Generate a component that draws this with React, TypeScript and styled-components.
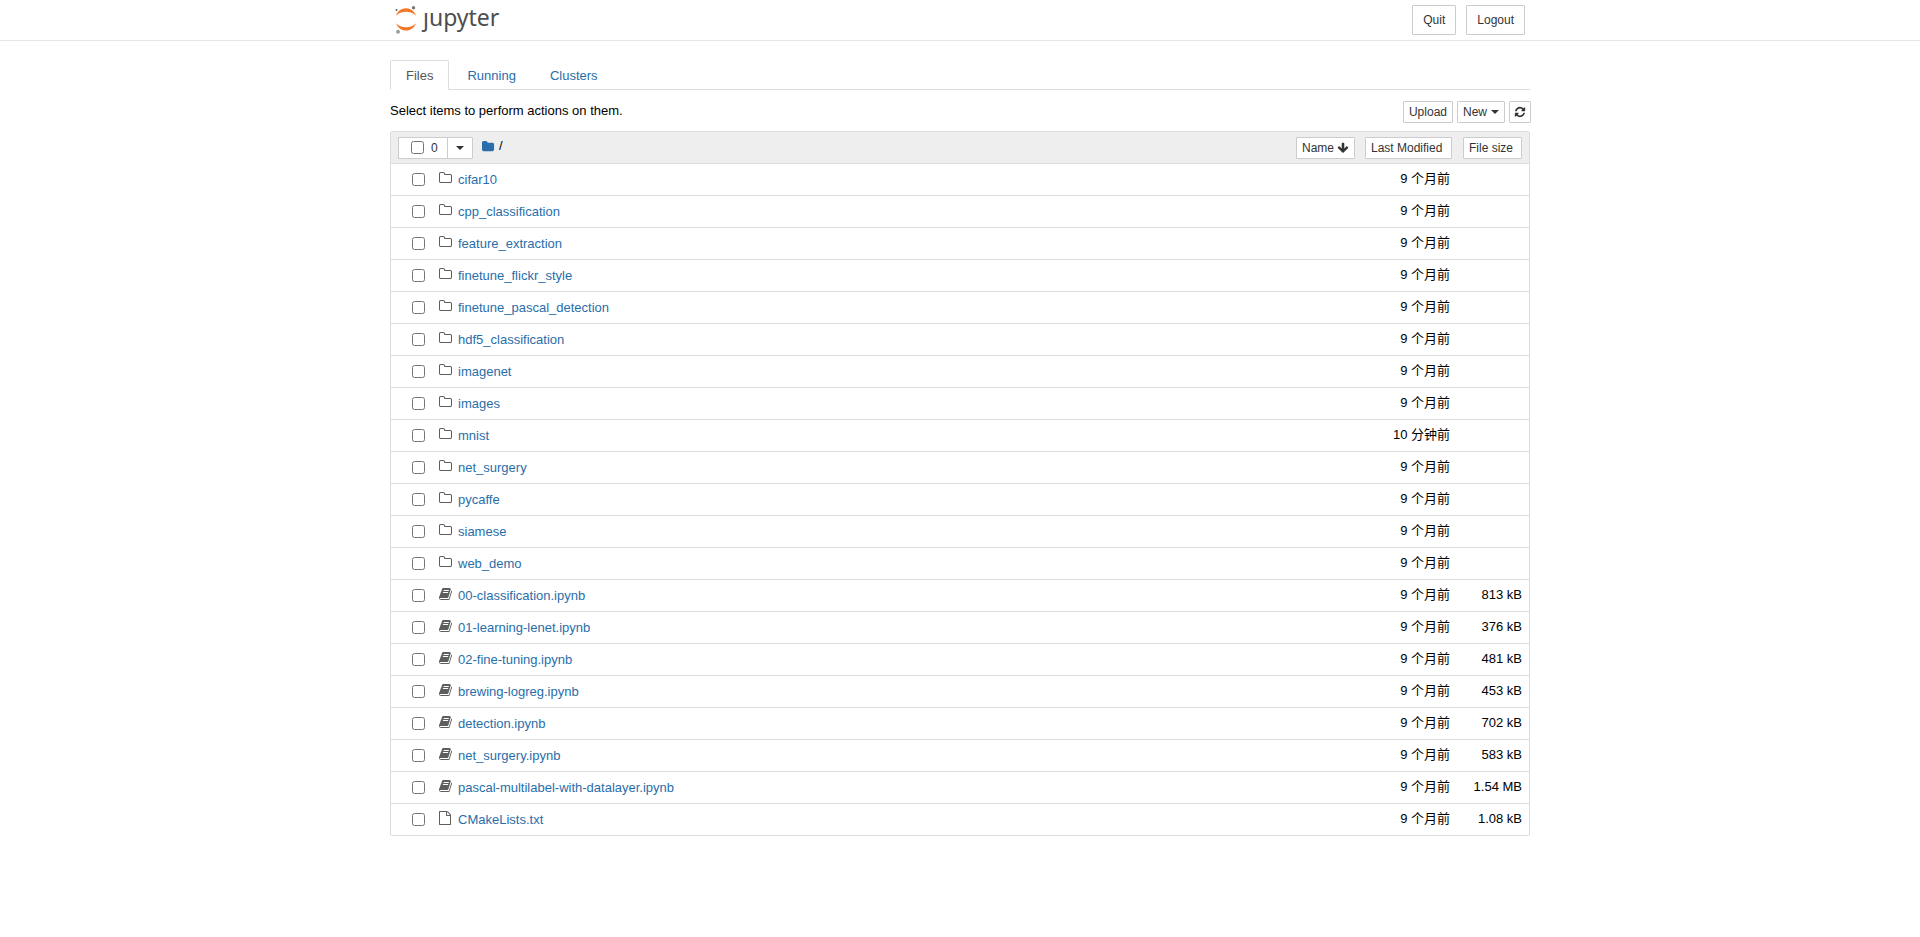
import React from "react";
import styled, { createGlobalStyle } from "styled-components";

const GlobalStyle = createGlobalStyle`
  *, *::before, *::after { box-sizing: border-box; }
  body {
    margin: 0;
    background: #fff;
    color: #000;
    font-family: "Liberation Sans", Arial, "Noto Sans CJK SC", sans-serif;
    font-size: 13px;
    line-height: 20px;
  }
`;

const Container = styled.div`
  max-width: 1140px;
  margin: 0 auto;
`;

const Header = styled.header`
  border-bottom: 1px solid #e7e7e7;
`;

const HeaderInner = styled(Container)`
  display: flex;
  justify-content: space-between;
  align-items: flex-start;
  height: 40px;
  padding: 5px 5px 0;
`;

const Brand = styled.a`
  display: flex;
  gap: 6px;
  color: #4e4e4e;
  text-decoration: none;
`;

const BrandName = styled.span`
  font-family: "Noto Sans", "Open Sans", sans-serif;
  font-size: 23px;
  line-height: 24px;
`;

const HeaderActions = styled.div`
  display: flex;
  gap: 10px;
`;

const Button = styled.button<{ $large?: boolean }>`
  display: inline-flex;
  align-items: center;
  gap: 4px;
  height: ${(p) => (p.$large ? 30 : 22)}px;
  padding: ${(p) => (p.$large ? "0 10px" : "0 5px")};
  border: 1px solid #ccc;
  border-radius: 1px;
  background: #fff;
  color: #333;
  font: 12px/18px "Liberation Sans", Arial, sans-serif;
  cursor: pointer;
`;

const IconButton = styled(Button)`
  padding: 0 4px;
`;

const SortButton = styled(Button)<{ $width: number }>`
  gap: 3px;
  width: ${(p) => p.$width}px;
`;

const Tabs = styled.nav`
  display: flex;
  gap: 2px;
  margin-top: 19px;
  border-bottom: 1px solid #ddd;
`;

const Tab = styled.a<{ $active?: boolean }>`
  margin-bottom: -1px;
  padding: 5px 15px 3px;
  border: 1px solid ${(p) => (p.$active ? "#ddd" : "transparent")};
  border-bottom-color: ${(p) => (p.$active ? "#fff" : "transparent")};
  border-radius: 2px 2px 0 0;
  color: ${(p) => (p.$active ? "#555" : "#296eaa")};
  text-decoration: none;
`;

const Toolbar = styled.div`
  display: flex;
  justify-content: space-between;
  align-items: flex-start;
  padding: 11px 0 8px;
`;

const ToolbarActions = styled.div`
  display: flex;
  gap: 4px;
  margin-right: -1px;
`;

const Caret = styled.span`
  border: 4px solid transparent;
  border-top-color: currentColor;
  border-bottom: 0;
`;

const FileTable = styled.table`
  width: 100%;
  border: 1px solid #ddd;
  border-radius: 2px;
  border-collapse: separate;
  border-spacing: 0;
  table-layout: fixed;
`;

const HeadCell = styled.th<{ $width?: number; $inset: number }>`
  width: ${(p) => (p.$width ? `${p.$width}px` : "auto")};
  height: 32px;
  padding: 0 ${(p) => p.$inset}px 0 0;
  border-bottom: 1px solid #ddd;
  background: #eee;
  font-weight: normal;
  text-align: right;
`;

const HeadBar = styled.div`
  display: flex;
  align-items: center;
  padding-left: 7px;
`;

const SelectGroup = styled.div`
  display: flex;
`;

const SelectAll = styled.label`
  display: flex;
  align-items: center;
  gap: 7px;
  width: 50px;
  height: 22px;
  padding-left: 12px;
  border: 1px solid #ccc;
  background: #fff;
  color: #333;
  font-size: 12px;
`;

const SelectMenu = styled(Button)`
  justify-content: center;
  width: 26px;
  margin-left: -1px;
`;

const Checkbox = styled.input`
  flex: none;
  width: 13px;
  height: 13px;
  margin: 0;
`;

const Breadcrumb = styled.div`
  display: flex;
  flex: 1;
  align-items: center;
  gap: 4px;
  margin-left: 9px;
  padding-bottom: 3px;
`;

const RootLink = styled.a`
  display: flex;
  color: #296eaa;
`;

const Cell = styled.td<{ $align?: "right" }>`
  height: 32px;
  padding: 0 7px 2px 0;
  border-bottom: 1px solid #ddd;
  text-align: ${(p) => p.$align ?? "left"};
  tr:last-child & { border-bottom: 0; height: 31px; }
`;

const Entry = styled.div`
  display: flex;
  align-items: center;
  padding: 2px 0 0 21px;
`;

const EntryIcon = styled.span`
  display: flex;
  width: 14px;
  margin: 0 5px 0 14px;
  padding-bottom: 4px;
  color: #5e5e5e;
`;

const EntryLink = styled.a`
  color: #296eaa;
  text-decoration: none;
`;

const icons = {
  folderOpen:
    "M1600 1312v-704q0-40-28-68t-68-28h-704q-40 0-68-28t-28-68v-64q0-40-28-68t-68-28h-320q-40 0-68 28t-28 68v960q0 40 28 68t68 28h1216q40 0 68-28t28-68zm128-704v704q0 92-66 158t-158 66h-1216q-92 0-158-66t-66-158v-960q0-92 66-158t158-66h320q92 0 158 66t66 158v32h672q92 0 158 66t66 158z",
  folder:
    "M1728 608v704q0 92-66 158t-158 66h-1216q-92 0-158-66t-66-158v-960q0-92 66-158t158-66h320q92 0 158 66t66 158v32h672q92 0 158 66t66 158z",
  refresh:
    "M1639 1056q0 5-1 7-64 268-268 434.5t-478 166.5q-146 0-282.5-55t-243.5-157l-129 129q-19 19-45 19t-45-19-19-45v-448q0-26 19-45t45-19h448q26 0 45 19t19 45-19 45l-137 137q71 66 161 102t187 36q134 0 250-65t186-179q11-17 53-117 8-23 30-23h192q13 0 22.5 9.5t9.5 22.5zm25-800v448q0 26-19 45t-45 19h-448q-26 0-45-19t-19-45 19-45l138-138q-148-137-349-137-134 0-250 65t-186 179q-11 17-53 117-8 23-30 23h-199q-13 0-22.5-9.5t-9.5-22.5v-7q65-268 270-434.5t480-166.5q146 0 284 55.5t245 156.5l130-129q19-19 45-19t45 19 19 45z",
  arrowDown:
    "M1675 832q0 53-37 90l-651 652q-39 37-91 37-53 0-90-37l-651-652q-38-36-38-90 0-53 38-91l74-75q39-37 91-37 53 0 90 37l294 294v-704q0-52 38-90t90-38h128q52 0 90 38t38 90v704l294-294q37-37 90-37 52 0 91 37l75 75q37 39 37 91z",
  book:
    "M1703 478q40 57 18 129l-275 906q-19 64-76.5 107.5t-122.5 43.5h-923q-77 0-148.5-53.5t-99.5-131.5q-24-67-2-127 0-4 3-27t4-37q1-8-3-21.5t-3-19.5q2-11 8-21t16.5-23.5 16.5-23.5q23-38 45-91.5t30-91.5q3-10 .5-30t-.5-28q3-11 17-28t17-23q21-36 42-92t25-90q1-9-2.5-32t.5-28q4-13 22-30.5t22-22.5q19-26 42.5-84.5t27.5-96.5q1-8-3-25.5t-2-26.5q2-8 9-18t18-23 17-21q8-12 16.5-30.5t15-35 16-36 19.5-32 26.5-23.5 36-11.5 47.5 5.5l-1 3q38-9 51-9h761q74 0 114 56t18 130l-274 906q-36 119-71.5 153.5t-128.5 34.5h-869q-27 0-38 15-11 16-1 43 24 70 144 70h923q29 0 56-15.5t35-41.5l300-987q7-22 5-57 38 15 59 43zm-1064 2q-4 13 2 22.5t20 9.5h608q13 0 25.5-9.5t16.5-22.5l21-64q4-13-2-22.5t-20-9.5h-608q-13 0-25.5 9.5t-16.5 22.5zm-83 256q-4 13 2 22.5t20 9.5h608q13 0 25.5-9.5t16.5-22.5l21-64q4-13-2-22.5t-20-9.5h-608q-13 0-25.5 9.5t-16.5 22.5z",
  file:
    "M1596 380q28 28 48 76t20 88v1152q0 40-28 68t-68 28h-1344q-40 0-68-28t-28-68v-1600q0-40 28-68t68-28h896q40 0 88 20t76 48zm-444-244v376h376q-10-29-22-41l-313-313q-12-12-41-22zm384 1528v-1024h-416q-40 0-68-28t-28-68v-416h-768v1536h1280z",
};

// x offset of each drawing inside its 1792 unit em square
const iconLeft: Record<keyof typeof icons, number> = {
  folderOpen: 64,
  folder: 64,
  refresh: 0,
  arrowDown: 0,
  book: 64,
  file: 128,
};

function Icon({ name, size = 14 }: { name: keyof typeof icons; size?: number }) {
  return (
    <svg width={size} height={size} viewBox={`${iconLeft[name]} 0 1792 1792`} fill="currentColor" aria-hidden="true">
      <path d={icons[name]} />
    </svg>
  );
}

function JupyterMark() {
  return (
    <svg width="22" height="30" viewBox="0 0 22 30" aria-hidden="true">
      <path d="M1 10.800C2.600 6.200 6.300 3.300 11 3.300S19.400 6.200 21 10.800C18.500 8 15 6.700 11 6.700S3.500 8 1 10.800Z" fill="#f37726" />
      <path d="M1 18.200C2.600 22.700 6.300 25.500 11 25.500S19.400 22.700 21 18.200C18.500 20.900 15 22.200 11 22.200S3.500 20.900 1 18.200Z" fill="#f37726" />
      <circle cx="18.500" cy="2.700" r="1.700" fill="#767677" />
      <circle cx="1.500" cy="4.900" r="1" fill="#616262" />
      <circle cx="3" cy="26.700" r="2" fill="#9e9e9e" />
    </svg>
  );
}

type Kind = "folderOpen" | "book" | "file";
type FileItem = { name: string; kind: Kind; modified: string; size: string };

const item = (name: string, kind: Kind, size = "", modified = "9 个月前"): FileItem => ({ name, kind, size, modified });

const files: FileItem[] = [
  item("cifar10", "folderOpen"),
  item("cpp_classification", "folderOpen"),
  item("feature_extraction", "folderOpen"),
  item("finetune_flickr_style", "folderOpen"),
  item("finetune_pascal_detection", "folderOpen"),
  item("hdf5_classification", "folderOpen"),
  item("imagenet", "folderOpen"),
  item("images", "folderOpen"),
  item("mnist", "folderOpen", "", "10 分钟前"),
  item("net_surgery", "folderOpen"),
  item("pycaffe", "folderOpen"),
  item("siamese", "folderOpen"),
  item("web_demo", "folderOpen"),
  item("00-classification.ipynb", "book", "813 kB"),
  item("01-learning-lenet.ipynb", "book", "376 kB"),
  item("02-fine-tuning.ipynb", "book", "481 kB"),
  item("brewing-logreg.ipynb", "book", "453 kB"),
  item("detection.ipynb", "book", "702 kB"),
  item("net_surgery.ipynb", "book", "583 kB"),
  item("pascal-multilabel-with-datalayer.ipynb", "book", "1.54 MB"),
  item("CMakeLists.txt", "file", "1.08 kB"),
];

function FileRow({ file }: { file: FileItem }) {
  return (
    <tr>
      <Cell>
        <Entry>
          <Checkbox type="checkbox" aria-label={`Select ${file.name}`} />
          <EntryIcon>
            <Icon name={file.kind} />
          </EntryIcon>
          <EntryLink href="#">{file.name}</EntryLink>
        </Entry>
      </Cell>
      <Cell $align="right">{file.modified}</Cell>
      <Cell $align="right">{file.size}</Cell>
    </tr>
  );
}

export default function App() {
  return (
    <>
      <GlobalStyle />
      <Header>
        <HeaderInner>
          <Brand href="#">
            <JupyterMark />
            <BrandName>ȷupyter</BrandName>
          </Brand>
          <HeaderActions>
            <Button $large>Quit</Button>
            <Button $large>Logout</Button>
          </HeaderActions>
        </HeaderInner>
      </Header>
      <Container as="main">
        <Tabs>
          <Tab href="#" $active>Files</Tab>
          <Tab href="#">Running</Tab>
          <Tab href="#">Clusters</Tab>
        </Tabs>
        <Toolbar>
          <span>Select items to perform actions on them.</span>
          <ToolbarActions>
            <Button>Upload</Button>
            <Button>New <Caret /></Button>
            <IconButton aria-label="Refresh"><Icon name="refresh" size={12} /></IconButton>
          </ToolbarActions>
        </Toolbar>
        <FileTable>
          <thead>
            <tr>
              <HeadCell $inset={8}>
                <HeadBar>
                  <SelectGroup>
                    <SelectAll>
                      <Checkbox type="checkbox" />
                      0
                    </SelectAll>
                    <SelectMenu aria-label="Select by type"><Caret /></SelectMenu>
                  </SelectGroup>
                  <Breadcrumb>
                    <RootLink href="#" aria-label="Home"><Icon name="folder" size={13} /></RootLink>
                    <span>/</span>
                  </Breadcrumb>
                  <SortButton $width={59}>Name <Icon name="arrowDown" size={12} /></SortButton>
                </HeadBar>
              </HeadCell>
              <HeadCell $width={94} $inset={5}><SortButton $width={87}>Last Modified</SortButton></HeadCell>
              <HeadCell $width={72} $inset={7}><SortButton $width={59}>File size</SortButton></HeadCell>
            </tr>
          </thead>
          <tbody>
            {files.map((file) => <FileRow key={file.name} file={file} />)}
          </tbody>
        </FileTable>
      </Container>
    </>
  );
}
